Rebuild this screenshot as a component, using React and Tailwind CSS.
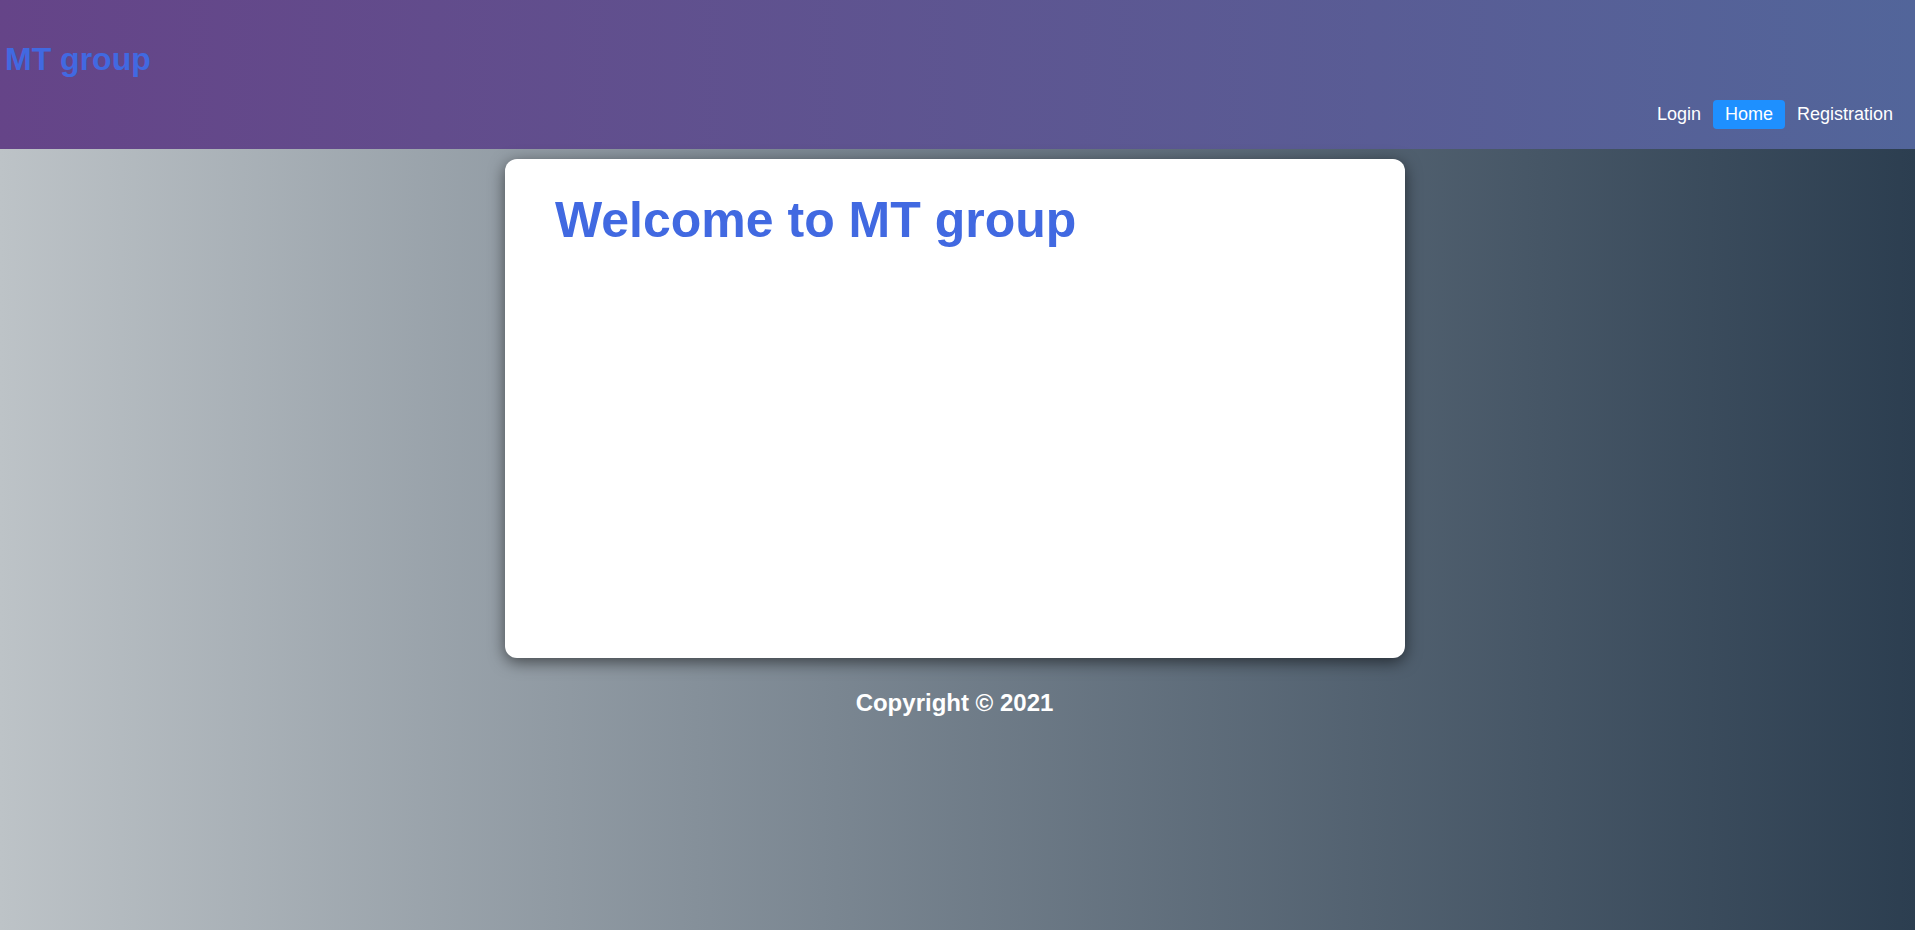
import React from 'react';

const links = ['Login', 'Home', 'Registration'];

const App = () => {
    return (
        <div className="min-h-[930px] bg-gradient-to-r from-[#bdc3c7] to-[#2c3e50] font-['Liberation_Sans',Arial,sans-serif]">
            <header className="h-[149px] bg-gradient-to-r from-[#654488] to-[#52659a] px-[5px] pt-[41px]">
                <h1 className="text-[32px] font-bold leading-[37px] text-[#4169e1]">MT group</h1>
                <nav className="flex justify-end mt-[22px] pr-[5px]">
                    {links.map(l => (
                        <a
                            key={l}
                            href="#"
                            className={
                                l === 'Home'
                                    ? 'px-3 py-1 text-[18px] leading-[21px] text-white bg-[#1e90ff] rounded'
                                    : 'px-3 py-1 text-[18px] leading-[21px] text-white'
                            }
                        >
                            {l}
                        </a>
                    ))}
                </nav>
            </header>

            <main className="w-[900px] h-[499px] ml-[505px] mt-[10px] px-[50px] bg-white rounded-xl shadow-[0_4px_16px_rgba(0,0,0,0.55)]">
                <h1 className="pt-[33px] text-[50px] font-bold leading-[57px] text-[#4169e1]">Welcome to MT group</h1>
            </main>

            <h2 className="mt-[31px] pr-[6px] text-center text-[24px] font-bold leading-[28px] text-white">Copyright © 2021</h2>
        </div>
    );
};

export default App;
